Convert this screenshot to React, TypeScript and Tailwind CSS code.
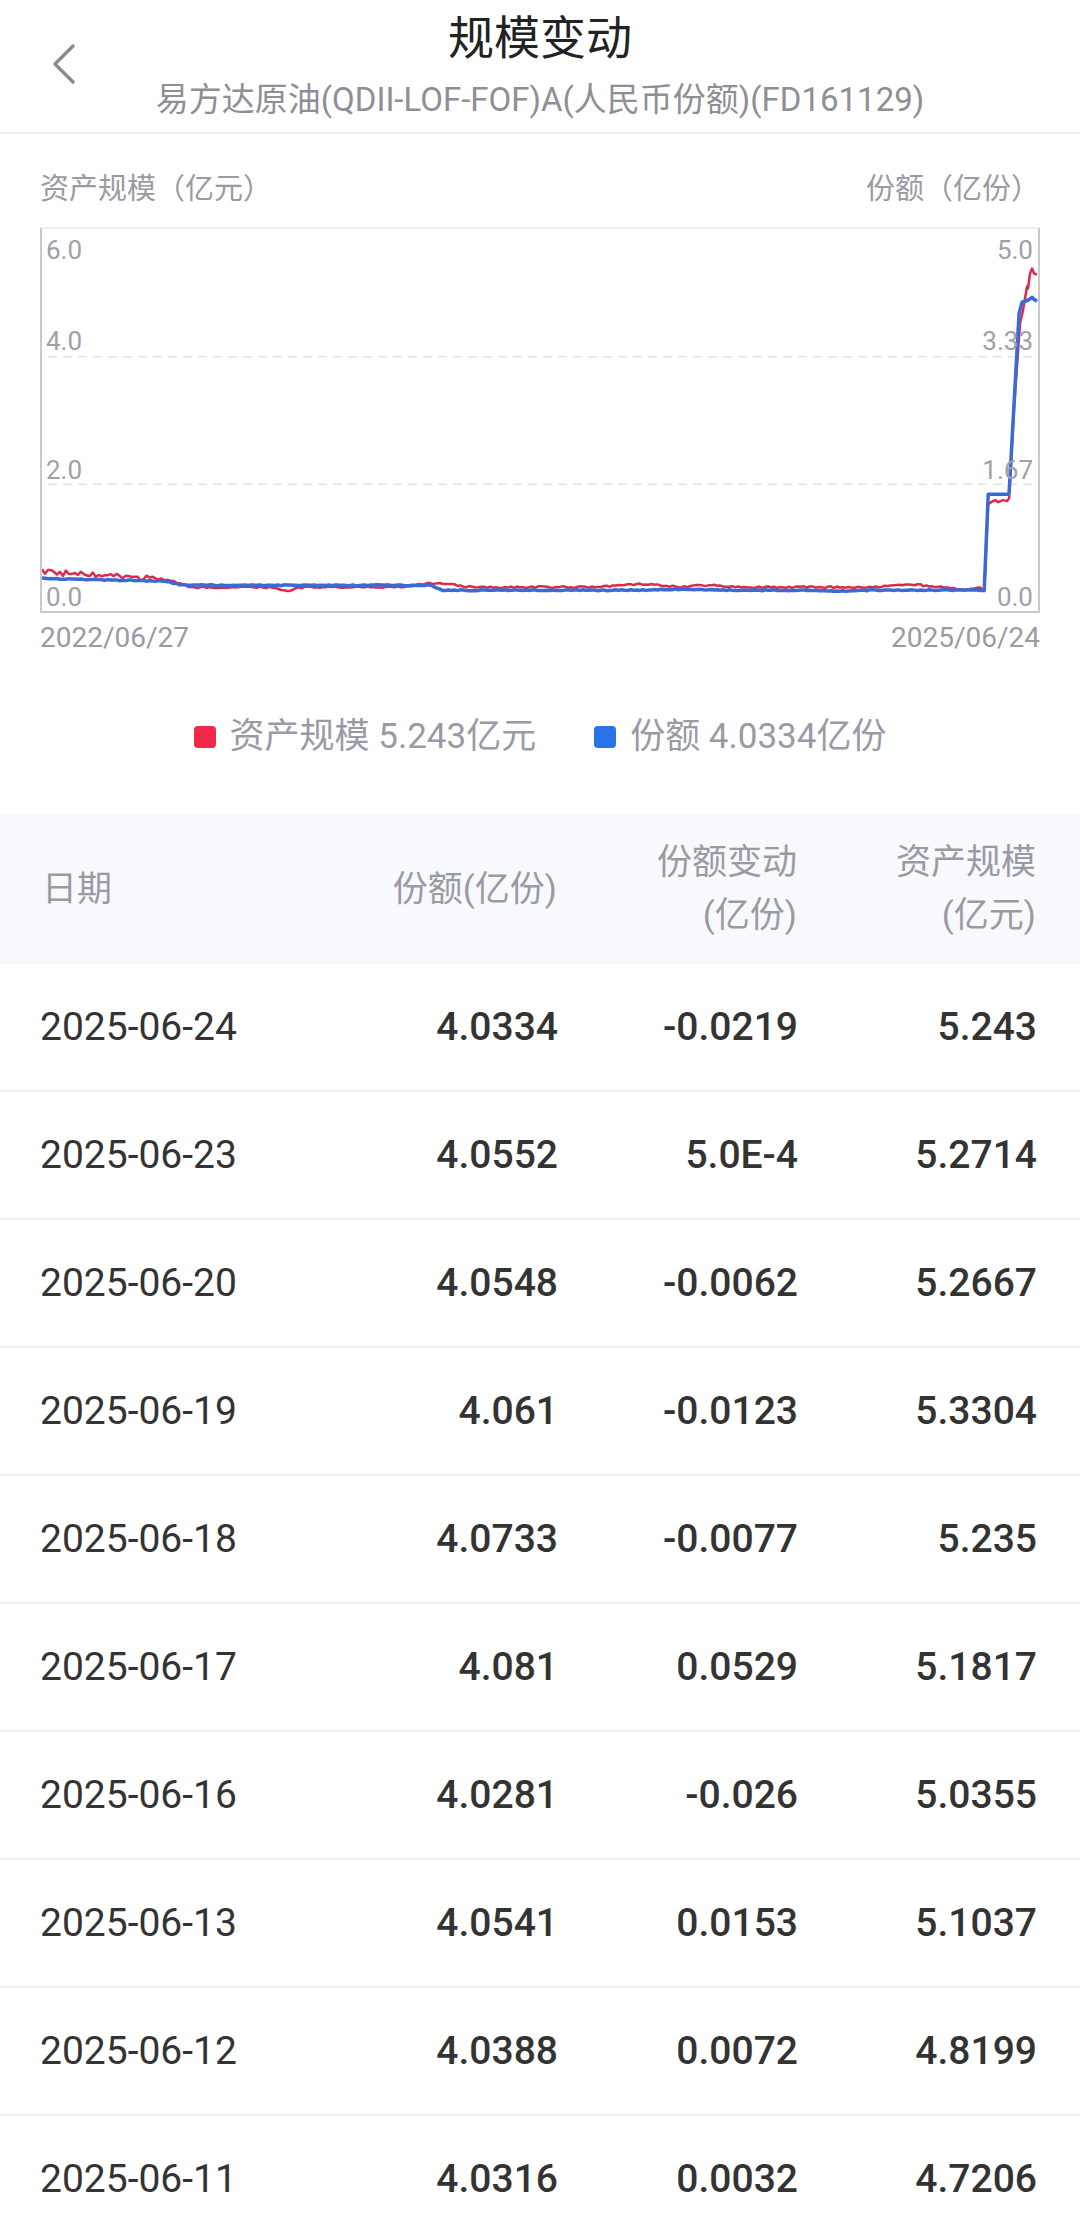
import React from 'react';

const rows = [
	{ date: '2025-06-24', share: '4.0334', change: '-0.0219', asset: '5.243' },
	{ date: '2025-06-23', share: '4.0552', change: '5.0E-4', asset: '5.2714' },
	{ date: '2025-06-20', share: '4.0548', change: '-0.0062', asset: '5.2667' },
	{ date: '2025-06-19', share: '4.061', change: '-0.0123', asset: '5.3304' },
	{ date: '2025-06-18', share: '4.0733', change: '-0.0077', asset: '5.235' },
	{ date: '2025-06-17', share: '4.081', change: '0.0529', asset: '5.1817' },
	{ date: '2025-06-16', share: '4.0281', change: '-0.026', asset: '5.0355' },
	{ date: '2025-06-13', share: '4.0541', change: '0.0153', asset: '5.1037' },
	{ date: '2025-06-12', share: '4.0388', change: '0.0072', asset: '4.8199' },
	{ date: '2025-06-11', share: '4.0316', change: '0.0032', asset: '4.7206' },
];

// deterministic noise in [-1, 1]
const noise = (i: number) => {
	const s = Math.sin(i * 12.9898 + 78.233) * 43758.5453;
	return (s - Math.floor(s)) * 2 - 1;
};
const bump = (x: number, c: number, w: number, a: number) => a * Math.exp(-(((x - c) / w) ** 2));
const lerp = (x: number, x0: number, x1: number, y0: number, y1: number) =>
	y0 + ((y1 - y0) * Math.min(Math.max(x - x0, 0), x1 - x0)) / (x1 - x0);

function blueY(x: number) {
	let y = 353;
	if (x < 125) y = lerp(x, 0, 125, 353, 356);
	else if (x < 140) y = lerp(x, 125, 140, 356, 360);
	else if (x < 390) y = 360;
	else if (x < 402) y = lerp(x, 390, 402, 360, 365);
	else y = 365;
	return y + bump(x, 640, 30, -1) + bump(x, 800, 20, 1) + noise(x) * 0.5;
}

function redY(x: number) {
	let y = 347;
	if (x < 125) y = lerp(x, 0, 125, 346, 354) + noise(x * 3.1) * 2.5;
	else if (x < 150) y = lerp(x, 125, 150, 354, 362);
	else y = 362;
	y += bump(x, 245, 10, 4) + bump(x, 395, 25, -4) + bump(x, 600, 30, -3) + bump(x, 670, 20, -2);
	y += bump(x, 870, 20, -3) + bump(x, 925, 10, 3);
	return y + noise(x * 1.7) * 0.9;
}

function buildPath(fn: (x: number) => number, tail: [number, number][]) {
	const pts: string[] = [];
	for (let x = 0; x <= 944; x += 3) pts.push(`${x},${fn(x).toFixed(1)}`);
	tail.forEach(([x, y]) => pts.push(`${x},${y}`));
	return 'M' + pts.join(' L');
}

const bluePath = buildPath(blueY, [
	[946, 365], [950, 268], [970, 268], [971, 266], [981, 85], [984, 74], [990, 72],
	[994, 69], [996, 71], [999, 73],
]);
const redPath = buildPath(redY, [
	[946, 366], [950, 278], [953, 276], [957, 274], [960, 276], [965, 274], [969, 275],
	[971, 272], [976, 180], [982, 95], [985, 82], [987, 70], [989, 58], [990, 60], [992, 45],
	[994, 40], [996, 45], [999, 46],
]);

const leftTicks = [
	{ label: '6.0', top: 'top-[8px]' },
	{ label: '4.0', top: 'top-[99px]' },
	{ label: '2.0', top: 'top-[228px]' },
	{ label: '0.0', top: 'top-[355px]' },
];
const rightTicks = [
	{ label: '5.0', top: 'top-[8px]' },
	{ label: '3.33', top: 'top-[99px]' },
	{ label: '1.67', top: 'top-[228px]' },
	{ label: '0.0', top: 'top-[355px]' },
];

export default function App() {
	return (
		<div className="w-[1080px] min-h-[2219px] bg-white font-['Roboto','Noto_Sans_CJK_SC',sans-serif]">
			{/* Header */}
			<div className="relative h-[134px] border-b-2 border-[#f0f0f0] flex flex-col items-center pt-[10px]">
				<svg className="absolute left-[52px] top-[43px]" width="24" height="42" viewBox="0 0 24 42" fill="none">
					<path d="M21 3 L3 21 L21 39" stroke="#8c8c8c" strokeWidth="3.5" strokeLinecap="round" strokeLinejoin="round" />
				</svg>
				<div className="text-[46px] leading-[56px] text-[#222]">规模变动</div>
				<div className="mt-[12px] text-[33px] leading-[44px] text-[#8e8e96]">
					易方达原油(QDII-LOF-FOF)A(人民币份额)(FD161129)
				</div>
			</div>

			{/* Chart */}
			<div className="px-[40px] pt-[36px]">
				<div className="flex justify-between text-[29px] leading-[38px] text-[#9a9aa4]">
					<span>资产规模（亿元）</span>
					<span>份额（亿份）</span>
				</div>
				<div className="relative mt-[19px] h-[386px] border-2 border-[#c9c9c9] border-t-[#eeeeee]">
					<svg className="absolute inset-0 w-full h-full" viewBox="0 0 1000 386" preserveAspectRatio="none">
						<line x1="6" y1="129" x2="1000" y2="129" stroke="#e4e4e4" strokeWidth="1.5" strokeDasharray="9 6" vectorEffect="non-scaling-stroke" />
						<line x1="6" y1="258" x2="1000" y2="258" stroke="#e4e4e4" strokeWidth="1.5" strokeDasharray="9 6" vectorEffect="non-scaling-stroke" />
						<path d={redPath} fill="none" stroke="#dc2a4b" strokeWidth="2.5" strokeLinejoin="round" vectorEffect="non-scaling-stroke" />
						<path d={bluePath} fill="none" stroke="#3a6bd3" strokeWidth="3.5" strokeLinejoin="round" vectorEffect="non-scaling-stroke" />
					</svg>
					{leftTicks.map((t) => (
						<span key={t.label} className={`absolute left-[4px] ${t.top} text-[26px] leading-[26px] text-[#a0a0a8]`}>
							{t.label}
						</span>
					))}
					{rightTicks.map((t) => (
						<span key={t.label} className={`absolute right-[5px] ${t.top} text-[26px] leading-[26px] text-[#a0a0a8]`}>
							{t.label}
						</span>
					))}
				</div>
				<div className="mt-[8px] flex justify-between text-[28px] leading-[34px] text-[#9a9aa4]">
					<span>2022/06/27</span>
					<span>2025/06/24</span>
				</div>
			</div>

			{/* Legend */}
			<div className="mt-[60px] flex justify-center items-center text-[35px] leading-[44px] text-[#9a9aa6]">
				<span className="w-[22px] h-[22px] rounded-[4px] bg-[#f0294b]"></span>
				<span className="ml-[14px]">资产规模 5.243亿元</span>
				<span className="ml-[58px] w-[22px] h-[22px] rounded-[4px] bg-[#2a72e8]"></span>
				<span className="ml-[14px]">份额 4.0334亿份</span>
			</div>

			{/* Table */}
			<div className="mt-[55px]">
				<div className="h-[150px] bg-[#f8f9fc] pl-[40px] pr-[44px] grid grid-cols-[257px_260px_240px_239px] items-center text-[35px] leading-[53px] text-[#9a9aa6]">
					<div className="pl-[2px]">日期</div>
					<div className="text-right">份额(亿份)</div>
					<div className="text-right">
						<div>份额变动</div>
						<div>(亿份)</div>
					</div>
					<div className="text-right">
						<div>资产规模</div>
						<div>(亿元)</div>
					</div>
				</div>
				{rows.map((row) => (
					<div
						key={row.date}
						className="h-[128px] border-b-2 border-[#eeeeee] pl-[40px] pr-[43px] grid grid-cols-[257px_261px_240px_239px] items-center text-[39px] text-[#333]"
					>
						<div>{row.date}</div>
						<div className="text-right font-medium">{row.share}</div>
						<div className="text-right font-medium">{row.change}</div>
						<div className="text-right font-medium">{row.asset}</div>
					</div>
				))}
			</div>
		</div>
	);
}
